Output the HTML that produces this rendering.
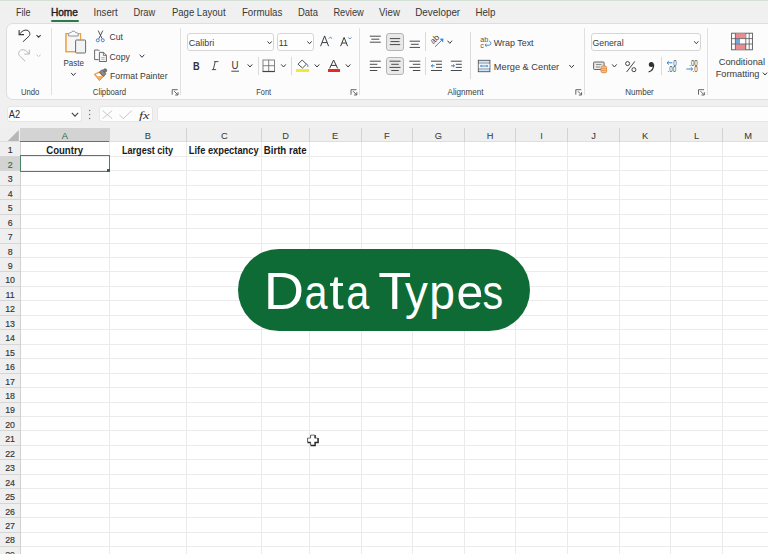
<!DOCTYPE html>
<html><head><meta charset="utf-8"><style>
html,body{margin:0;padding:0;}
body{width:768px;height:554px;overflow:hidden;position:relative;background:#f0f0f0;font-family:"Liberation Sans", sans-serif;}
.t{position:absolute;white-space:nowrap;}
.r{position:absolute;}
svg.r{overflow:visible;}
</style></head><body>
<div class="r" style="left:0.00px;top:0.00px;width:768.00px;height:1.00px;background:#d4dfd6"></div>
<div class="r" style="left:50.70px;top:19.60px;width:28.00px;height:2.00px;background:#2a7a4a;border-radius:1px"></div>
<div class="r" style="left:6.00px;top:23.30px;width:800.00px;height:76.40px;background:#fcfcfc;border:1px solid #dedede;border-radius:7px;box-sizing:border-box"></div>
<div class="r" style="left:51.00px;top:28.00px;width:1.00px;height:67.00px;background:#e0e0e0"></div>
<div class="r" style="left:180.20px;top:28.00px;width:1.00px;height:67.00px;background:#e0e0e0"></div>
<div class="r" style="left:359.30px;top:28.00px;width:1.00px;height:67.00px;background:#e0e0e0"></div>
<div class="r" style="left:584.20px;top:28.00px;width:1.00px;height:67.00px;background:#e0e0e0"></div>
<div class="r" style="left:707.00px;top:28.00px;width:1.00px;height:67.00px;background:#e0e0e0"></div>
<div class="r" style="left:187.40px;top:33.40px;width:86.60px;height:17.30px;background:#fefefe;border:1px solid #d6d6d6;border-radius:3px;box-sizing:border-box"></div>
<div class="r" style="left:276.50px;top:33.40px;width:37.50px;height:17.30px;background:#fefefe;border:1px solid #d6d6d6;border-radius:3px;box-sizing:border-box"></div>
<div class="r" style="left:257.60px;top:57.00px;width:1.00px;height:18.00px;background:#dadada"></div>
<div class="r" style="left:291.20px;top:57.00px;width:1.00px;height:18.00px;background:#dadada"></div>
<div class="r" style="left:296.40px;top:69.40px;width:12.80px;height:3.00px;background:#f2e83a"></div>
<div class="r" style="left:327.50px;top:69.40px;width:12.20px;height:3.00px;background:#e02b2b"></div>
<div class="r" style="left:385.80px;top:32.80px;width:18.20px;height:18.00px;background:#e9e9e9;border:1px solid #b4b4b4;border-radius:3px;box-sizing:border-box"></div>
<div class="r" style="left:425.40px;top:32.00px;width:1.00px;height:19.00px;background:#dadada"></div>
<div class="r" style="left:385.80px;top:57.00px;width:18.20px;height:18.30px;background:#e9e9e9;border:1px solid #b4b4b4;border-radius:3px;box-sizing:border-box"></div>
<div class="r" style="left:425.40px;top:57.00px;width:1.00px;height:18.30px;background:#dadada"></div>
<div class="r" style="left:470.40px;top:32.00px;width:1.00px;height:47.00px;background:#dadada"></div>
<div class="r" style="left:590.60px;top:33.00px;width:110.40px;height:17.80px;background:#fefefe;border:1px solid #d6d6d6;border-radius:3px;box-sizing:border-box"></div>
<div class="r" style="left:661.00px;top:57.00px;width:1.00px;height:18.30px;background:#dadada"></div>
<div class="r" style="left:7.00px;top:106.20px;width:75.00px;height:16.10px;background:#fdfdfd;border:1px solid #e6e6e6;border-radius:3px;box-sizing:border-box"></div>
<div class="r" style="left:98.50px;top:106.20px;width:54.10px;height:16.10px;background:#fdfdfd;border:1px solid #e6e6e6;border-radius:3px;box-sizing:border-box"></div>
<div class="r" style="left:156.80px;top:106.20px;width:643.20px;height:16.10px;background:#fdfdfd;border:1px solid #e6e6e6;border-radius:3px;box-sizing:border-box"></div>
<div class="r" style="left:0.00px;top:128.00px;width:768.00px;height:14.00px;background:#efefef"></div>
<div class="r" style="left:0.00px;top:142.00px;width:20.40px;height:412.00px;background:#efefef"></div>
<div class="r" style="left:20.40px;top:142.00px;width:747.60px;height:412.00px;background:#ffffff"></div>
<div class="r" style="left:20.40px;top:128.00px;width:88.80px;height:14.00px;background:#d3d3d3"></div>
<div class="r" style="left:0.00px;top:141.00px;width:768.00px;height:1.00px;background:#dedede"></div>
<div class="r" style="left:20.40px;top:140.60px;width:88.80px;height:1.70px;background:#4a8360"></div>
<div class="r" style="left:108.70px;top:128.00px;width:1.00px;height:14.00px;background:#d3d3d3"></div>
<div class="r" style="left:186.10px;top:128.00px;width:1.00px;height:14.00px;background:#d3d3d3"></div>
<div class="r" style="left:261.40px;top:128.00px;width:1.00px;height:14.00px;background:#d3d3d3"></div>
<div class="r" style="left:308.85px;top:128.00px;width:1.00px;height:14.00px;background:#d3d3d3"></div>
<div class="r" style="left:360.50px;top:128.00px;width:1.00px;height:14.00px;background:#d3d3d3"></div>
<div class="r" style="left:412.00px;top:128.00px;width:1.00px;height:14.00px;background:#d3d3d3"></div>
<div class="r" style="left:463.90px;top:128.00px;width:1.00px;height:14.00px;background:#d3d3d3"></div>
<div class="r" style="left:515.10px;top:128.00px;width:1.00px;height:14.00px;background:#d3d3d3"></div>
<div class="r" style="left:567.20px;top:128.00px;width:1.00px;height:14.00px;background:#d3d3d3"></div>
<div class="r" style="left:618.75px;top:128.00px;width:1.00px;height:14.00px;background:#d3d3d3"></div>
<div class="r" style="left:670.30px;top:128.00px;width:1.00px;height:14.00px;background:#d3d3d3"></div>
<div class="r" style="left:721.90px;top:128.00px;width:1.00px;height:14.00px;background:#d3d3d3"></div>
<div class="r" style="left:19.90px;top:142.00px;width:1.00px;height:412.00px;background:#d2d2d2"></div>
<div class="r" style="left:0.00px;top:156.40px;width:19.90px;height:14.45px;background:#d3d3d3"></div>
<div class="r" style="left:108.70px;top:142.00px;width:1.00px;height:412.00px;background:#eaeaea"></div>
<div class="r" style="left:186.10px;top:142.00px;width:1.00px;height:412.00px;background:#eaeaea"></div>
<div class="r" style="left:261.40px;top:142.00px;width:1.00px;height:412.00px;background:#eaeaea"></div>
<div class="r" style="left:308.85px;top:142.00px;width:1.00px;height:412.00px;background:#eaeaea"></div>
<div class="r" style="left:360.50px;top:142.00px;width:1.00px;height:412.00px;background:#eaeaea"></div>
<div class="r" style="left:412.00px;top:142.00px;width:1.00px;height:412.00px;background:#eaeaea"></div>
<div class="r" style="left:463.90px;top:142.00px;width:1.00px;height:412.00px;background:#eaeaea"></div>
<div class="r" style="left:515.10px;top:142.00px;width:1.00px;height:412.00px;background:#eaeaea"></div>
<div class="r" style="left:567.20px;top:142.00px;width:1.00px;height:412.00px;background:#eaeaea"></div>
<div class="r" style="left:618.75px;top:142.00px;width:1.00px;height:412.00px;background:#eaeaea"></div>
<div class="r" style="left:670.30px;top:142.00px;width:1.00px;height:412.00px;background:#eaeaea"></div>
<div class="r" style="left:721.90px;top:142.00px;width:1.00px;height:412.00px;background:#eaeaea"></div>
<div class="r" style="left:20.90px;top:155.90px;width:747.10px;height:1.00px;background:#ebebeb"></div>
<div class="r" style="left:0.00px;top:155.90px;width:19.90px;height:1.00px;background:#d6d6d6"></div>
<div class="r" style="left:20.90px;top:170.35px;width:747.10px;height:1.00px;background:#ebebeb"></div>
<div class="r" style="left:0.00px;top:170.35px;width:19.90px;height:1.00px;background:#d6d6d6"></div>
<div class="r" style="left:20.90px;top:184.80px;width:747.10px;height:1.00px;background:#ebebeb"></div>
<div class="r" style="left:0.00px;top:184.80px;width:19.90px;height:1.00px;background:#d6d6d6"></div>
<div class="r" style="left:20.90px;top:199.24px;width:747.10px;height:1.00px;background:#ebebeb"></div>
<div class="r" style="left:0.00px;top:199.24px;width:19.90px;height:1.00px;background:#d6d6d6"></div>
<div class="r" style="left:20.90px;top:213.69px;width:747.10px;height:1.00px;background:#ebebeb"></div>
<div class="r" style="left:0.00px;top:213.69px;width:19.90px;height:1.00px;background:#d6d6d6"></div>
<div class="r" style="left:20.90px;top:228.14px;width:747.10px;height:1.00px;background:#ebebeb"></div>
<div class="r" style="left:0.00px;top:228.14px;width:19.90px;height:1.00px;background:#d6d6d6"></div>
<div class="r" style="left:20.90px;top:242.59px;width:747.10px;height:1.00px;background:#ebebeb"></div>
<div class="r" style="left:0.00px;top:242.59px;width:19.90px;height:1.00px;background:#d6d6d6"></div>
<div class="r" style="left:20.90px;top:257.04px;width:747.10px;height:1.00px;background:#ebebeb"></div>
<div class="r" style="left:0.00px;top:257.04px;width:19.90px;height:1.00px;background:#d6d6d6"></div>
<div class="r" style="left:20.90px;top:271.48px;width:747.10px;height:1.00px;background:#ebebeb"></div>
<div class="r" style="left:0.00px;top:271.48px;width:19.90px;height:1.00px;background:#d6d6d6"></div>
<div class="r" style="left:20.90px;top:285.93px;width:747.10px;height:1.00px;background:#ebebeb"></div>
<div class="r" style="left:0.00px;top:285.93px;width:19.90px;height:1.00px;background:#d6d6d6"></div>
<div class="r" style="left:20.90px;top:300.38px;width:747.10px;height:1.00px;background:#ebebeb"></div>
<div class="r" style="left:0.00px;top:300.38px;width:19.90px;height:1.00px;background:#d6d6d6"></div>
<div class="r" style="left:20.90px;top:314.83px;width:747.10px;height:1.00px;background:#ebebeb"></div>
<div class="r" style="left:0.00px;top:314.83px;width:19.90px;height:1.00px;background:#d6d6d6"></div>
<div class="r" style="left:20.90px;top:329.28px;width:747.10px;height:1.00px;background:#ebebeb"></div>
<div class="r" style="left:0.00px;top:329.28px;width:19.90px;height:1.00px;background:#d6d6d6"></div>
<div class="r" style="left:20.90px;top:343.72px;width:747.10px;height:1.00px;background:#ebebeb"></div>
<div class="r" style="left:0.00px;top:343.72px;width:19.90px;height:1.00px;background:#d6d6d6"></div>
<div class="r" style="left:20.90px;top:358.17px;width:747.10px;height:1.00px;background:#ebebeb"></div>
<div class="r" style="left:0.00px;top:358.17px;width:19.90px;height:1.00px;background:#d6d6d6"></div>
<div class="r" style="left:20.90px;top:372.62px;width:747.10px;height:1.00px;background:#ebebeb"></div>
<div class="r" style="left:0.00px;top:372.62px;width:19.90px;height:1.00px;background:#d6d6d6"></div>
<div class="r" style="left:20.90px;top:387.07px;width:747.10px;height:1.00px;background:#ebebeb"></div>
<div class="r" style="left:0.00px;top:387.07px;width:19.90px;height:1.00px;background:#d6d6d6"></div>
<div class="r" style="left:20.90px;top:401.52px;width:747.10px;height:1.00px;background:#ebebeb"></div>
<div class="r" style="left:0.00px;top:401.52px;width:19.90px;height:1.00px;background:#d6d6d6"></div>
<div class="r" style="left:20.90px;top:415.96px;width:747.10px;height:1.00px;background:#ebebeb"></div>
<div class="r" style="left:0.00px;top:415.96px;width:19.90px;height:1.00px;background:#d6d6d6"></div>
<div class="r" style="left:20.90px;top:430.41px;width:747.10px;height:1.00px;background:#ebebeb"></div>
<div class="r" style="left:0.00px;top:430.41px;width:19.90px;height:1.00px;background:#d6d6d6"></div>
<div class="r" style="left:20.90px;top:444.86px;width:747.10px;height:1.00px;background:#ebebeb"></div>
<div class="r" style="left:0.00px;top:444.86px;width:19.90px;height:1.00px;background:#d6d6d6"></div>
<div class="r" style="left:20.90px;top:459.31px;width:747.10px;height:1.00px;background:#ebebeb"></div>
<div class="r" style="left:0.00px;top:459.31px;width:19.90px;height:1.00px;background:#d6d6d6"></div>
<div class="r" style="left:20.90px;top:473.76px;width:747.10px;height:1.00px;background:#ebebeb"></div>
<div class="r" style="left:0.00px;top:473.76px;width:19.90px;height:1.00px;background:#d6d6d6"></div>
<div class="r" style="left:20.90px;top:488.20px;width:747.10px;height:1.00px;background:#ebebeb"></div>
<div class="r" style="left:0.00px;top:488.20px;width:19.90px;height:1.00px;background:#d6d6d6"></div>
<div class="r" style="left:20.90px;top:502.65px;width:747.10px;height:1.00px;background:#ebebeb"></div>
<div class="r" style="left:0.00px;top:502.65px;width:19.90px;height:1.00px;background:#d6d6d6"></div>
<div class="r" style="left:20.90px;top:517.10px;width:747.10px;height:1.00px;background:#ebebeb"></div>
<div class="r" style="left:0.00px;top:517.10px;width:19.90px;height:1.00px;background:#d6d6d6"></div>
<div class="r" style="left:20.90px;top:531.55px;width:747.10px;height:1.00px;background:#ebebeb"></div>
<div class="r" style="left:0.00px;top:531.55px;width:19.90px;height:1.00px;background:#d6d6d6"></div>
<div class="r" style="left:20.90px;top:546.00px;width:747.10px;height:1.00px;background:#ebebeb"></div>
<div class="r" style="left:0.00px;top:546.00px;width:19.90px;height:1.00px;background:#d6d6d6"></div>
<div class="r" style="left:19.80px;top:155.25px;width:90.10px;height:16.75px;border:1.9px solid #4a8360;box-sizing:border-box"></div>
<div class="r" style="left:106.90px;top:169.20px;width:3.20px;height:3.20px;background:#2f6a43"></div>
<div class="r" style="left:237.60px;top:248.70px;width:292.40px;height:82.30px;background:#0f6b36;border-radius:41px"></div>
<svg class="r" style="left:0;top:0" width="768" height="554" viewBox="0 0 768 554"><text transform="translate(15.90,16) scale(0.8975,1.0)" font-family="Liberation Sans" font-size="10.056" font-weight="400" font-style="normal" fill="#383838" >File</text><text transform="translate(50.90,16) scale(1.0106,1.0)" font-family="Liberation Sans" font-size="10.056" font-weight="400" font-style="normal" fill="#1e1e1e" stroke="#1e1e1e" stroke-width="0.4">Home</text><text transform="translate(93.60,16) scale(0.9552,1.0)" font-family="Liberation Sans" font-size="10.056" font-weight="400" font-style="normal" fill="#383838" >Insert</text><text transform="translate(133.60,16) scale(0.9219,1.0)" font-family="Liberation Sans" font-size="10.056" font-weight="400" font-style="normal" fill="#383838" >Draw</text><text transform="translate(171.90,16) scale(0.9518,1.0)" font-family="Liberation Sans" font-size="10.056" font-weight="400" font-style="normal" fill="#383838" >Page Layout</text><text transform="translate(241.90,16) scale(0.9678,1.0)" font-family="Liberation Sans" font-size="10.056" font-weight="400" font-style="normal" fill="#383838" >Formulas</text><text transform="translate(297.90,16) scale(0.9429,1.0)" font-family="Liberation Sans" font-size="10.056" font-weight="400" font-style="normal" fill="#383838" >Data</text><text transform="translate(333.40,16) scale(0.9203,1.0)" font-family="Liberation Sans" font-size="10.056" font-weight="400" font-style="normal" fill="#383838" >Review</text><text transform="translate(379.10,16) scale(0.9624,1.0)" font-family="Liberation Sans" font-size="10.056" font-weight="400" font-style="normal" fill="#383838" >View</text><text transform="translate(415.20,16) scale(0.9817,1.0)" font-family="Liberation Sans" font-size="10.056" font-weight="400" font-style="normal" fill="#383838" >Developer</text><text transform="translate(475.40,16) scale(0.9680,1.0)" font-family="Liberation Sans" font-size="10.056" font-weight="400" font-style="normal" fill="#383838" >Help</text><text transform="translate(20.90,95) scale(0.8920,1.0)" font-family="Liberation Sans" font-size="8.659" font-weight="400" font-style="normal" fill="#404040" >Undo</text><text transform="translate(92.80,95) scale(0.8997,1.0)" font-family="Liberation Sans" font-size="8.659" font-weight="400" font-style="normal" fill="#404040" >Clipboard</text><text transform="translate(256.25,95) scale(0.8581,1.0)" font-family="Liberation Sans" font-size="8.659" font-weight="400" font-style="normal" fill="#404040" >Font</text><text transform="translate(447.50,95) scale(0.9354,1.0)" font-family="Liberation Sans" font-size="8.659" font-weight="400" font-style="normal" fill="#404040" >Alignment</text><text transform="translate(625.30,95) scale(0.9269,1.0)" font-family="Liberation Sans" font-size="8.659" font-weight="400" font-style="normal" fill="#404040" >Number</text><g transform="translate(171.7,89.2)"><path d="M0.5 5.5 V0.5 H6" fill="none" stroke="#555" stroke-width="0.9"/><path d="M2.5 2 L6 5.5 M6.3 3 V5.8 H3.5" fill="none" stroke="#555" stroke-width="0.9"/></g><g transform="translate(350.5,89.2)"><path d="M0.5 5.5 V0.5 H6" fill="none" stroke="#555" stroke-width="0.9"/><path d="M2.5 2 L6 5.5 M6.3 3 V5.8 H3.5" fill="none" stroke="#555" stroke-width="0.9"/></g><g transform="translate(575.3,89.2)"><path d="M0.5 5.5 V0.5 H6" fill="none" stroke="#555" stroke-width="0.9"/><path d="M2.5 2 L6 5.5 M6.3 3 V5.8 H3.5" fill="none" stroke="#555" stroke-width="0.9"/></g><g transform="translate(698.0,89.2)"><path d="M0.5 5.5 V0.5 H6" fill="none" stroke="#555" stroke-width="0.9"/><path d="M2.5 2 L6 5.5 M6.3 3 V5.8 H3.5" fill="none" stroke="#555" stroke-width="0.9"/></g><path d="M19.4 34.3 C21.5 31.2 24.5 29.6 27 30.2 C30 31 30.6 34.6 29 36.2 L22.9 41.8" fill="none" stroke="#3a3a3a" stroke-width="1"/><path d="M19.1 30.1 V34.6 H24" fill="none" stroke="#3a3a3a" stroke-width="1.1"/><polyline points="36.50,35.20 38.60,37.20 40.70,35.20" fill="none" stroke="#3c3c3c" stroke-width="1.1"/><path d="M29 53.8 C27 50.7 24 49.2 21.5 49.8 C18.5 50.6 17.9 54.2 19.5 55.8 L25.2 61.3" fill="none" stroke="#b8b8b8" stroke-width="1"/><path d="M29.4 49.7 V54.1 H24.3" fill="none" stroke="#b8b8b8" stroke-width="1"/><polyline points="36.50,54.60 38.60,56.60 40.70,54.60" fill="none" stroke="#c8c8c8" stroke-width="1.0"/><path d="M69 33.6 H66 V51.6 H75.5" fill="#f5f5f5" stroke="#eba445" stroke-width="1.2"/><rect x="66.6" y="34.2" width="13.6" height="17" fill="#f6f6f6"/><path d="M69 33.6 H66 V51.6 H75.5 M78 33.6 H80.6 V39.5" fill="none" stroke="#eba445" stroke-width="1.2"/><path d="M68.6 36 V34 C68.6 33 70 32.6 71.2 32.6 C71.4 30.6 75.4 30.6 75.6 32.6 C76.8 32.6 78.2 33 78.2 34 V36 Z" fill="#fbfbfb" stroke="#8a8a8a" stroke-width="0.9"/><rect x="75.6" y="40" width="10" height="13" rx="0.8" fill="#f3f3f3" stroke="#6a6a6a" stroke-width="1"/><text transform="translate(63.50,66) scale(0.8150,1.0)" font-family="Liberation Sans" font-size="9.777" font-weight="400" font-style="normal" fill="#3a3a3a" >Paste</text><polyline points="71.10,72.90 73.40,75.50 75.70,72.90" fill="none" stroke="#3c3c3c" stroke-width="1.0"/><path d="M98.2 30.6 L102.2 38.8 M102.8 30.6 L98.8 38.8" fill="none" stroke="#444" stroke-width="0.9"/><circle cx="97.8" cy="40.3" r="1.5" fill="#fff" stroke="#3b86d6" stroke-width="1"/><circle cx="102.8" cy="40.3" r="1.5" fill="#fff" stroke="#3b86d6" stroke-width="1"/><text transform="translate(109.60,40) scale(0.8783,1.0)" font-family="Liberation Sans" font-size="9.777" font-weight="400" font-style="normal" fill="#3a3a3a" >Cut</text><path d="M98.6 59.6 H94.6 V50 H98.6 L99.6 51.2" fill="none" stroke="#5a5a5a" stroke-width="0.9"/><path d="M99.4 52.4 H103.6 L106.4 55.2 V61.5 H99.4 Z" fill="#f7f7f7" stroke="#5a5a5a" stroke-width="0.9"/><path d="M103.4 52.4 V55.4 H106.4" fill="none" stroke="#5a5a5a" stroke-width="0.8"/><path d="M101.2 57.6 H104.6 M101.2 59.3 H104.6" stroke="#999" stroke-width="0.7"/><text transform="translate(109.60,60) scale(0.8859,1.0)" font-family="Liberation Sans" font-size="9.777" font-weight="400" font-style="normal" fill="#3a3a3a" >Copy</text><polyline points="139.70,54.70 142.00,57.30 144.30,54.70" fill="none" stroke="#3c3c3c" stroke-width="1.0"/><path d="M94.3 74.3 L99.3 72 L103.6 76.4 L99.4 80.6 Z" fill="#f2b06a" stroke="#e08a3a" stroke-width="0.9"/><path d="M95.9 74.6 L99.2 73.1 L101.8 75.8 L98 76.2 Z" fill="#fff"/><path d="M99.3 72 L103.6 76.4 L106 73.6 L102.2 69.8 Z" fill="#8a8a8a" stroke="#555" stroke-width="0.8"/><circle cx="105.1" cy="70.4" r="1.7" fill="#777" stroke="#555" stroke-width="0.6"/><text transform="translate(110.00,79) scale(0.8908,1.0)" font-family="Liberation Sans" font-size="9.777" font-weight="400" font-style="normal" fill="#3a3a3a" >Format Painter</text><text transform="translate(188.80,46) scale(0.9162,1.0)" font-family="Liberation Sans" font-size="9.777" font-weight="400" font-style="normal" fill="#3a3a3a" >Calibri</text><polyline points="267.50,41.40 269.60,43.80 271.70,41.40" fill="none" stroke="#3c3c3c" stroke-width="1.0"/><text transform="translate(278.80,46) scale(0.9066,1.0)" font-family="Liberation Sans" font-size="9.777" font-weight="400" font-style="normal" fill="#3a3a3a" >11</text><polyline points="307.40,41.40 309.50,43.80 311.60,41.40" fill="none" stroke="#3c3c3c" stroke-width="1.0"/><path d="M320.6 46.2 L324.6 35.9 L328.6 46.2 M322.1 42.6 H327.1" fill="none" stroke="#3a3a3a" stroke-width="1"/><polyline points="328.8,38.6 330.4,37 332,38.6" fill="none" stroke="#2f7fd0" stroke-width="0.9"/><path d="M340.6 46.2 L344.1 37.4 L347.6 46.2 M341.9 43 H346.3" fill="none" stroke="#3a3a3a" stroke-width="1"/><polyline points="348.2,37.4 349.8,39 351.4,37.4" fill="none" stroke="#2f7fd0" stroke-width="0.9"/><text transform="translate(193.00,70) scale(0.8250,1.0)" font-family="Liberation Sans" font-size="11.173" font-weight="700" font-style="normal" fill="#333" >B</text><path d="M215.2 61.6 L213.3 69.6 M214.2 61.6 H218.4 M211.9 69.6 H216.1" fill="none" stroke="#3a3a3a" stroke-width="0.9"/><text transform="translate(231.60,69) scale(0.8875,1.0)" font-family="Liberation Sans" font-size="10.894" font-weight="400" font-style="normal" fill="#333" >U</text><path d="M231.3 71.2 H239" stroke="#333" stroke-width="0.9"/><polyline points="247.70,64.40 250.00,67.00 252.30,64.40" fill="none" stroke="#3c3c3c" stroke-width="1.0"/><rect x="263" y="60" width="11.4" height="11.4" fill="none" stroke="#666" stroke-width="0.8"/><path d="M268.7 60 V71.4 M263 65.7 H274.4" stroke="#666" stroke-width="0.8"/><path d="M262.6 71.5 H274.8" stroke="#444" stroke-width="1.2"/><polyline points="281.20,64.40 283.50,67.00 285.80,64.40" fill="none" stroke="#3c3c3c" stroke-width="1.0"/><path d="M298 64.2 L302.2 60 L306.4 64.2 L302.5 68 Z" fill="#fff" stroke="#3a3a3a" stroke-width="0.9"/><path d="M306.6 63.6 C307.6 65.2 308.4 66 307.6 67" fill="none" stroke="#2f7fd0" stroke-width="1"/><polyline points="314.70,64.40 317.00,67.00 319.30,64.40" fill="none" stroke="#3c3c3c" stroke-width="1.0"/><path d="M329.6 68.4 L333.6 60 L337.6 68.4 M331 65.4 H336.2" fill="none" stroke="#3a3a3a" stroke-width="1"/><polyline points="345.80,64.40 348.10,67.00 350.40,64.40" fill="none" stroke="#3c3c3c" stroke-width="1.0"/><path d="M369.80 36.20 H380.80" stroke="#4a4a4a" stroke-width="1"/><path d="M371.30 39.20 H379.30" stroke="#4a4a4a" stroke-width="1"/><path d="M369.80 42.20 H380.80" stroke="#4a4a4a" stroke-width="1"/><path d="M389.80 38.60 H400.20" stroke="#4a4a4a" stroke-width="1"/><path d="M390.50 41.60 H399.50" stroke="#4a4a4a" stroke-width="1"/><path d="M389.80 44.60 H400.20" stroke="#4a4a4a" stroke-width="1"/><path d="M409.60 41.20 H420.00" stroke="#4a4a4a" stroke-width="1"/><path d="M410.90 44.30 H418.70" stroke="#4a4a4a" stroke-width="1"/><path d="M409.60 47.40 H420.00" stroke="#4a4a4a" stroke-width="1"/><g transform="translate(434.4,39.0) rotate(-45)"><text x="-4.7" y="3.0" font-size="8.4" fill="#444" font-family="Liberation Sans">ab</text></g><path d="M435 46.8 L441.6 40.4" stroke="#3b86d6" stroke-width="1"/><path d="M439.6 38.8 L443.4 38.6 L443.2 42.4 Z" fill="#3b86d6"/><polyline points="447.50,40.70 449.80,43.30 452.10,40.70" fill="none" stroke="#3c3c3c" stroke-width="1.0"/><path d="M369.80 61.20 H380.80" stroke="#4a4a4a" stroke-width="1"/><path d="M369.80 64.30 H377.30" stroke="#4a4a4a" stroke-width="1"/><path d="M369.80 67.40 H380.80" stroke="#4a4a4a" stroke-width="1"/><path d="M369.80 70.50 H377.30" stroke="#4a4a4a" stroke-width="1"/><path d="M389.50 61.20 H400.50" stroke="#4a4a4a" stroke-width="1"/><path d="M391.25 64.30 H398.75" stroke="#4a4a4a" stroke-width="1"/><path d="M389.50 67.40 H400.50" stroke="#4a4a4a" stroke-width="1"/><path d="M391.25 70.50 H398.75" stroke="#4a4a4a" stroke-width="1"/><path d="M409.30 61.20 H420.30" stroke="#4a4a4a" stroke-width="1"/><path d="M412.80 64.30 H420.30" stroke="#4a4a4a" stroke-width="1"/><path d="M409.30 67.40 H420.30" stroke="#4a4a4a" stroke-width="1"/><path d="M412.80 70.50 H420.30" stroke="#4a4a4a" stroke-width="1"/><path d="M431 61.2 H442 M436 64.3 H442 M436 67.4 H442 M431 70.5 H442" stroke="#4a4a4a" stroke-width="1"/><path d="M434.6 65.8 H431.4 M432.8 64.4 L431.3 65.8 L432.8 67.2" fill="none" stroke="#2f7fd0" stroke-width="1"/><path d="M450.8 61.2 H461.8 M455.8 64.3 H461.8 M455.8 67.4 H461.8 M450.8 70.5 H461.8" stroke="#4a4a4a" stroke-width="1"/><path d="M451 65.8 H454.4 M453 64.4 L454.5 65.8 L453 67.2" fill="none" stroke="#2f7fd0" stroke-width="1"/><text x="480.2" y="41.6" font-size="7.2" fill="#555" font-family="Liberation Sans">ab</text><text x="480.2" y="47.8" font-size="7.2" fill="#555" font-family="Liberation Sans">c</text><path d="M485.3 45.2 H489 C491.5 45.2 491.5 41.5 489 41.2" fill="none" stroke="#2f7fd0" stroke-width="0.9"/><polyline points="486.5,43.8 485,45.2 486.5,46.6" fill="none" stroke="#2f7fd0" stroke-width="0.9"/><text transform="translate(493.80,46) scale(0.9123,1.0)" font-family="Liberation Sans" font-size="9.777" font-weight="400" font-style="normal" fill="#3a3a3a" >Wrap Text</text><rect x="478.3" y="60.3" width="11.6" height="11.4" fill="#cfe3f7" stroke="#555" stroke-width="0.9"/><path d="M478.3 63.2 H489.9 M478.3 68.8 H489.9" stroke="#555" stroke-width="0.7"/><rect x="478.8" y="63.6" width="10.6" height="4.8" fill="#f4f8fc"/><path d="M480.5 66 H487.7" stroke="#2f7fd0" stroke-width="0.9"/><polyline points="481.7,64.8 480.5,66 481.7,67.2" fill="none" stroke="#2f7fd0" stroke-width="0.8"/><polyline points="486.5,64.8 487.7,66 486.5,67.2" fill="none" stroke="#2f7fd0" stroke-width="0.8"/><text transform="translate(493.80,70) scale(0.9472,1.0)" font-family="Liberation Sans" font-size="9.777" font-weight="400" font-style="normal" fill="#3a3a3a" >Merge &amp; Center</text><polyline points="569.30,65.00 571.60,67.60 573.90,65.00" fill="none" stroke="#3c3c3c" stroke-width="1.0"/><text transform="translate(592.50,46) scale(0.8938,1.0)" font-family="Liberation Sans" font-size="9.777" font-weight="400" font-style="normal" fill="#3a3a3a" >General</text><polyline points="694.20,41.30 696.30,43.70 698.40,41.30" fill="none" stroke="#3c3c3c" stroke-width="1.0"/><rect x="593.6" y="62" width="10.5" height="7.5" rx="0.8" fill="#e8e8e8" stroke="#555" stroke-width="0.9"/><path d="M596 64.5 H601.6 M596 67 H600" stroke="#777" stroke-width="0.8"/><rect x="601" y="66" width="5.6" height="6.7" rx="1.5" fill="#f6c28f" stroke="#d9782b" stroke-width="0.8"/><path d="M601.8 68.4 H605.8 M601.8 70.4 H605.8" stroke="#d9782b" stroke-width="0.6"/><polyline points="612.10,64.40 614.40,67.00 616.70,64.40" fill="none" stroke="#3c3c3c" stroke-width="1.0"/><circle cx="627.6" cy="63.6" r="2" fill="none" stroke="#3a3a3a" stroke-width="0.95"/><circle cx="633.9" cy="69.7" r="2" fill="none" stroke="#3a3a3a" stroke-width="0.95"/><path d="M634.8 61.4 L626.6 72" stroke="#3a3a3a" stroke-width="0.95"/><circle cx="651.3" cy="64.4" r="2.5" fill="#2f2f2f"/><path d="M653.6 64.6 C653.8 68.5 651.5 71 648.6 72" fill="none" stroke="#2f2f2f" stroke-width="1.3"/><text transform="translate(673.2,66.4) scale(0.72,1)" font-size="8.6" fill="#4a4a4a" font-family="Liberation Sans">0</text><text transform="translate(667.6,72.2) scale(0.72,1)" font-size="8.6" fill="#4a4a4a" font-family="Liberation Sans">.00</text><path d="M667 62.8 H672.4 M668.8 61.1 L667 62.8 L668.8 64.5" fill="none" stroke="#3b86d6" stroke-width="1"/><text transform="translate(689.2,66.4) scale(0.72,1)" font-size="8.6" fill="#4a4a4a" font-family="Liberation Sans">.00</text><text transform="translate(692.6,72.2) scale(0.72,1)" font-size="8.6" fill="#4a4a4a" font-family="Liberation Sans">.0</text><path d="M686.4 69 H692.6 M690.8 67.3 L692.6 69 L690.8 70.7" fill="none" stroke="#3b86d6" stroke-width="1"/><rect x="731.6" y="33.2" width="20.8" height="16.6" fill="#fff" stroke="#555" stroke-width="0.9"/><rect x="735.4" y="33.6" width="9.6" height="4.8" fill="#e98b93"/><rect x="735.4" y="38.7" width="4.6" height="5" fill="#6ea8e3"/><rect x="735.4" y="44.2" width="10.6" height="5.2" fill="#e98b93"/><path d="M731.6 38.6 H752.4 M731.6 44 H752.4 M735.4 33.2 V49.8 M745.8 33.2 V49.8 M749.2 33.2 V49.8" stroke="#555" stroke-width="0.8" fill="none"/><text transform="translate(718.70,65) scale(0.9468,1.0)" font-family="Liberation Sans" font-size="9.777" font-weight="400" font-style="normal" fill="#3a3a3a" >Conditional</text><text transform="translate(715.70,77) scale(0.9364,1.0)" font-family="Liberation Sans" font-size="9.777" font-weight="400" font-style="normal" fill="#3a3a3a" >Formatting</text><polyline points="762.90,72.60 765.00,75.00 767.10,72.60" fill="none" stroke="#3c3c3c" stroke-width="1.0"/><text transform="translate(8.80,118) scale(0.8718,1.0)" font-family="Liberation Sans" font-size="10.615" font-weight="400" font-style="normal" fill="#2b2b2b" >A2</text><polyline points="71.80,112.80 75.00,116.20 78.20,112.80" fill="none" stroke="#444" stroke-width="1.1"/><circle cx="89.6" cy="110.4" r="0.75" fill="#777"/><circle cx="89.6" cy="114.4" r="0.75" fill="#777"/><circle cx="89.6" cy="118.4" r="0.75" fill="#777"/><path d="M102.6 110.6 L112.2 118.6 M112.2 110.6 L102.6 118.6" stroke="#c2c2c2" stroke-width="0.9"/><path d="M119.5 115 L123.4 118.6 L131.6 110.6" fill="none" stroke="#c2c2c2" stroke-width="0.9"/><text transform="translate(138.90,119) scale(1.3087,1.0)" font-family="Liberation Serif" font-size="11.173" font-weight="400" font-style="italic" fill="#333" >fx</text><path d="M7.8 141 L18.8 130 V141 Z" fill="#b6b6b6"/><text transform="translate(64.80,139) scale(1.0,1)" text-anchor="middle" font-family="Liberation Sans" font-size="9.3" font-weight="400" fill="#2f6f43" stroke="#2f6f43" stroke-width="0.05">A</text><text transform="translate(147.90,139) scale(1.0,1)" text-anchor="middle" font-family="Liberation Sans" font-size="9.3" font-weight="400" fill="#3a3a3a" stroke="#3a3a3a" stroke-width="0.05">B</text><text transform="translate(224.25,139) scale(1.0,1)" text-anchor="middle" font-family="Liberation Sans" font-size="9.3" font-weight="400" fill="#3a3a3a" stroke="#3a3a3a" stroke-width="0.05">C</text><text transform="translate(285.62,139) scale(1.0,1)" text-anchor="middle" font-family="Liberation Sans" font-size="9.3" font-weight="400" fill="#3a3a3a" stroke="#3a3a3a" stroke-width="0.05">D</text><text transform="translate(335.18,139) scale(1.0,1)" text-anchor="middle" font-family="Liberation Sans" font-size="9.3" font-weight="400" fill="#3a3a3a" stroke="#3a3a3a" stroke-width="0.05">E</text><text transform="translate(386.75,139) scale(1.0,1)" text-anchor="middle" font-family="Liberation Sans" font-size="9.3" font-weight="400" fill="#3a3a3a" stroke="#3a3a3a" stroke-width="0.05">F</text><text transform="translate(438.45,139) scale(1.0,1)" text-anchor="middle" font-family="Liberation Sans" font-size="9.3" font-weight="400" fill="#3a3a3a" stroke="#3a3a3a" stroke-width="0.05">G</text><text transform="translate(490.00,139) scale(1.0,1)" text-anchor="middle" font-family="Liberation Sans" font-size="9.3" font-weight="400" fill="#3a3a3a" stroke="#3a3a3a" stroke-width="0.05">H</text><text transform="translate(541.65,139) scale(1.0,1)" text-anchor="middle" font-family="Liberation Sans" font-size="9.3" font-weight="400" fill="#3a3a3a" stroke="#3a3a3a" stroke-width="0.05">I</text><text transform="translate(593.48,139) scale(1.0,1)" text-anchor="middle" font-family="Liberation Sans" font-size="9.3" font-weight="400" fill="#3a3a3a" stroke="#3a3a3a" stroke-width="0.05">J</text><text transform="translate(645.02,139) scale(1.0,1)" text-anchor="middle" font-family="Liberation Sans" font-size="9.3" font-weight="400" fill="#3a3a3a" stroke="#3a3a3a" stroke-width="0.05">K</text><text transform="translate(696.60,139) scale(1.0,1)" text-anchor="middle" font-family="Liberation Sans" font-size="9.3" font-weight="400" fill="#3a3a3a" stroke="#3a3a3a" stroke-width="0.05">L</text><text transform="translate(748.20,139) scale(1.0,1)" text-anchor="middle" font-family="Liberation Sans" font-size="9.3" font-weight="400" fill="#3a3a3a" stroke="#3a3a3a" stroke-width="0.05">M</text><text transform="translate(10.10,153) scale(0.92,1)" text-anchor="middle" font-family="Liberation Sans" font-size="9.6" font-weight="400" fill="#333333" stroke="#333333" stroke-width="0.15">1</text><text transform="translate(10.10,168) scale(0.92,1)" text-anchor="middle" font-family="Liberation Sans" font-size="9.6" font-weight="400" fill="#2f6f43" stroke="#2f6f43" stroke-width="0.15">2</text><text transform="translate(10.10,182) scale(0.92,1)" text-anchor="middle" font-family="Liberation Sans" font-size="9.6" font-weight="400" fill="#333333" stroke="#333333" stroke-width="0.15">3</text><text transform="translate(10.10,197) scale(0.92,1)" text-anchor="middle" font-family="Liberation Sans" font-size="9.6" font-weight="400" fill="#333333" stroke="#333333" stroke-width="0.15">4</text><text transform="translate(10.10,211) scale(0.92,1)" text-anchor="middle" font-family="Liberation Sans" font-size="9.6" font-weight="400" fill="#333333" stroke="#333333" stroke-width="0.15">5</text><text transform="translate(10.10,226) scale(0.92,1)" text-anchor="middle" font-family="Liberation Sans" font-size="9.6" font-weight="400" fill="#333333" stroke="#333333" stroke-width="0.15">6</text><text transform="translate(10.10,240) scale(0.92,1)" text-anchor="middle" font-family="Liberation Sans" font-size="9.6" font-weight="400" fill="#333333" stroke="#333333" stroke-width="0.15">7</text><text transform="translate(10.10,255) scale(0.92,1)" text-anchor="middle" font-family="Liberation Sans" font-size="9.6" font-weight="400" fill="#333333" stroke="#333333" stroke-width="0.15">8</text><text transform="translate(10.10,269) scale(0.92,1)" text-anchor="middle" font-family="Liberation Sans" font-size="9.6" font-weight="400" fill="#333333" stroke="#333333" stroke-width="0.15">9</text><text transform="translate(10.10,283) scale(0.92,1)" text-anchor="middle" font-family="Liberation Sans" font-size="9.6" font-weight="400" fill="#333333" stroke="#333333" stroke-width="0.15">10</text><text transform="translate(10.10,298) scale(0.92,1)" text-anchor="middle" font-family="Liberation Sans" font-size="9.6" font-weight="400" fill="#333333" stroke="#333333" stroke-width="0.15">11</text><text transform="translate(10.10,312) scale(0.92,1)" text-anchor="middle" font-family="Liberation Sans" font-size="9.6" font-weight="400" fill="#333333" stroke="#333333" stroke-width="0.15">12</text><text transform="translate(10.10,327) scale(0.92,1)" text-anchor="middle" font-family="Liberation Sans" font-size="9.6" font-weight="400" fill="#333333" stroke="#333333" stroke-width="0.15">13</text><text transform="translate(10.10,341) scale(0.92,1)" text-anchor="middle" font-family="Liberation Sans" font-size="9.6" font-weight="400" fill="#333333" stroke="#333333" stroke-width="0.15">14</text><text transform="translate(10.10,356) scale(0.92,1)" text-anchor="middle" font-family="Liberation Sans" font-size="9.6" font-weight="400" fill="#333333" stroke="#333333" stroke-width="0.15">15</text><text transform="translate(10.10,370) scale(0.92,1)" text-anchor="middle" font-family="Liberation Sans" font-size="9.6" font-weight="400" fill="#333333" stroke="#333333" stroke-width="0.15">16</text><text transform="translate(10.10,385) scale(0.92,1)" text-anchor="middle" font-family="Liberation Sans" font-size="9.6" font-weight="400" fill="#333333" stroke="#333333" stroke-width="0.15">17</text><text transform="translate(10.10,399) scale(0.92,1)" text-anchor="middle" font-family="Liberation Sans" font-size="9.6" font-weight="400" fill="#333333" stroke="#333333" stroke-width="0.15">18</text><text transform="translate(10.10,413) scale(0.92,1)" text-anchor="middle" font-family="Liberation Sans" font-size="9.6" font-weight="400" fill="#333333" stroke="#333333" stroke-width="0.15">19</text><text transform="translate(10.10,428) scale(0.92,1)" text-anchor="middle" font-family="Liberation Sans" font-size="9.6" font-weight="400" fill="#333333" stroke="#333333" stroke-width="0.15">20</text><text transform="translate(10.10,442) scale(0.92,1)" text-anchor="middle" font-family="Liberation Sans" font-size="9.6" font-weight="400" fill="#333333" stroke="#333333" stroke-width="0.15">21</text><text transform="translate(10.10,457) scale(0.92,1)" text-anchor="middle" font-family="Liberation Sans" font-size="9.6" font-weight="400" fill="#333333" stroke="#333333" stroke-width="0.15">22</text><text transform="translate(10.10,471) scale(0.92,1)" text-anchor="middle" font-family="Liberation Sans" font-size="9.6" font-weight="400" fill="#333333" stroke="#333333" stroke-width="0.15">23</text><text transform="translate(10.10,486) scale(0.92,1)" text-anchor="middle" font-family="Liberation Sans" font-size="9.6" font-weight="400" fill="#333333" stroke="#333333" stroke-width="0.15">24</text><text transform="translate(10.10,500) scale(0.92,1)" text-anchor="middle" font-family="Liberation Sans" font-size="9.6" font-weight="400" fill="#333333" stroke="#333333" stroke-width="0.15">25</text><text transform="translate(10.10,515) scale(0.92,1)" text-anchor="middle" font-family="Liberation Sans" font-size="9.6" font-weight="400" fill="#333333" stroke="#333333" stroke-width="0.15">26</text><text transform="translate(10.10,529) scale(0.92,1)" text-anchor="middle" font-family="Liberation Sans" font-size="9.6" font-weight="400" fill="#333333" stroke="#333333" stroke-width="0.15">27</text><text transform="translate(10.10,543) scale(0.92,1)" text-anchor="middle" font-family="Liberation Sans" font-size="9.6" font-weight="400" fill="#333333" stroke="#333333" stroke-width="0.15">28</text><text transform="translate(10.10,558) scale(0.92,1)" text-anchor="middle" font-family="Liberation Sans" font-size="9.6" font-weight="400" fill="#333333" stroke="#333333" stroke-width="0.15">29</text><text transform="translate(46.20,154) scale(0.9311,1.0)" font-family="Liberation Sans" font-size="10.335" font-weight="700" font-style="normal" fill="#1a1a1a" >Country</text><text transform="translate(122.00,154) scale(0.8793,1.0)" font-family="Liberation Sans" font-size="10.335" font-weight="700" font-style="normal" fill="#1a1a1a" >Largest city</text><text transform="translate(188.80,154) scale(0.9003,1.0)" font-family="Liberation Sans" font-size="10.335" font-weight="700" font-style="normal" fill="#1a1a1a" >Life expectancy</text><text transform="translate(263.80,154) scale(0.9314,1.0)" font-family="Liberation Sans" font-size="10.335" font-weight="700" font-style="normal" fill="#1a1a1a" >Birth rate</text><text transform="translate(263.68,309) scale(1.0806,1.0)" font-family="Liberation Sans" font-size="51.676" font-weight="400" font-style="normal" fill="#ffffff" >D</text><text transform="translate(304.45,309) scale(0.8000,0.94)" font-family="Liberation Sans" font-size="51.676" font-weight="400" font-style="normal" fill="#ffffff" >a</text><text transform="translate(329.30,309) scale(1.0143,0.94)" font-family="Liberation Sans" font-size="51.676" font-weight="400" font-style="normal" fill="#ffffff" >t</text><text transform="translate(346.15,309) scale(0.8000,0.94)" font-family="Liberation Sans" font-size="51.676" font-weight="400" font-style="normal" fill="#ffffff" >a</text><text transform="translate(378.15,309) scale(1.0467,1.0)" font-family="Liberation Sans" font-size="51.676" font-weight="400" font-style="normal" fill="#ffffff" >T</text><text transform="translate(404.90,309) scale(0.8846,0.94)" font-family="Liberation Sans" font-size="51.676" font-weight="400" font-style="normal" fill="#ffffff" >y</text><text transform="translate(429.31,309) scale(0.8958,0.94)" font-family="Liberation Sans" font-size="51.676" font-weight="400" font-style="normal" fill="#ffffff" >p</text><text transform="translate(456.54,309) scale(0.9320,0.94)" font-family="Liberation Sans" font-size="51.676" font-weight="400" font-style="normal" fill="#ffffff" >e</text><text transform="translate(482.50,309) scale(0.8000,0.94)" font-family="Liberation Sans" font-size="51.676" font-weight="400" font-style="normal" fill="#ffffff" >s</text><path d="M311.20 435.70 H315.20 V438.70 H318.20 V442.70 H315.20 V445.70 H311.20 V442.70 H308.20 V438.70 H311.20 Z" fill="none" stroke="#222" stroke-width="1.2"/><path d="M310.60 435.10 H314.60 V438.10 H317.60 V442.10 H314.60 V445.10 H310.60 V442.10 H307.60 V438.10 H310.60 Z" fill="#fff" stroke="#333" stroke-width="0.7"/></svg>
</body></html>
